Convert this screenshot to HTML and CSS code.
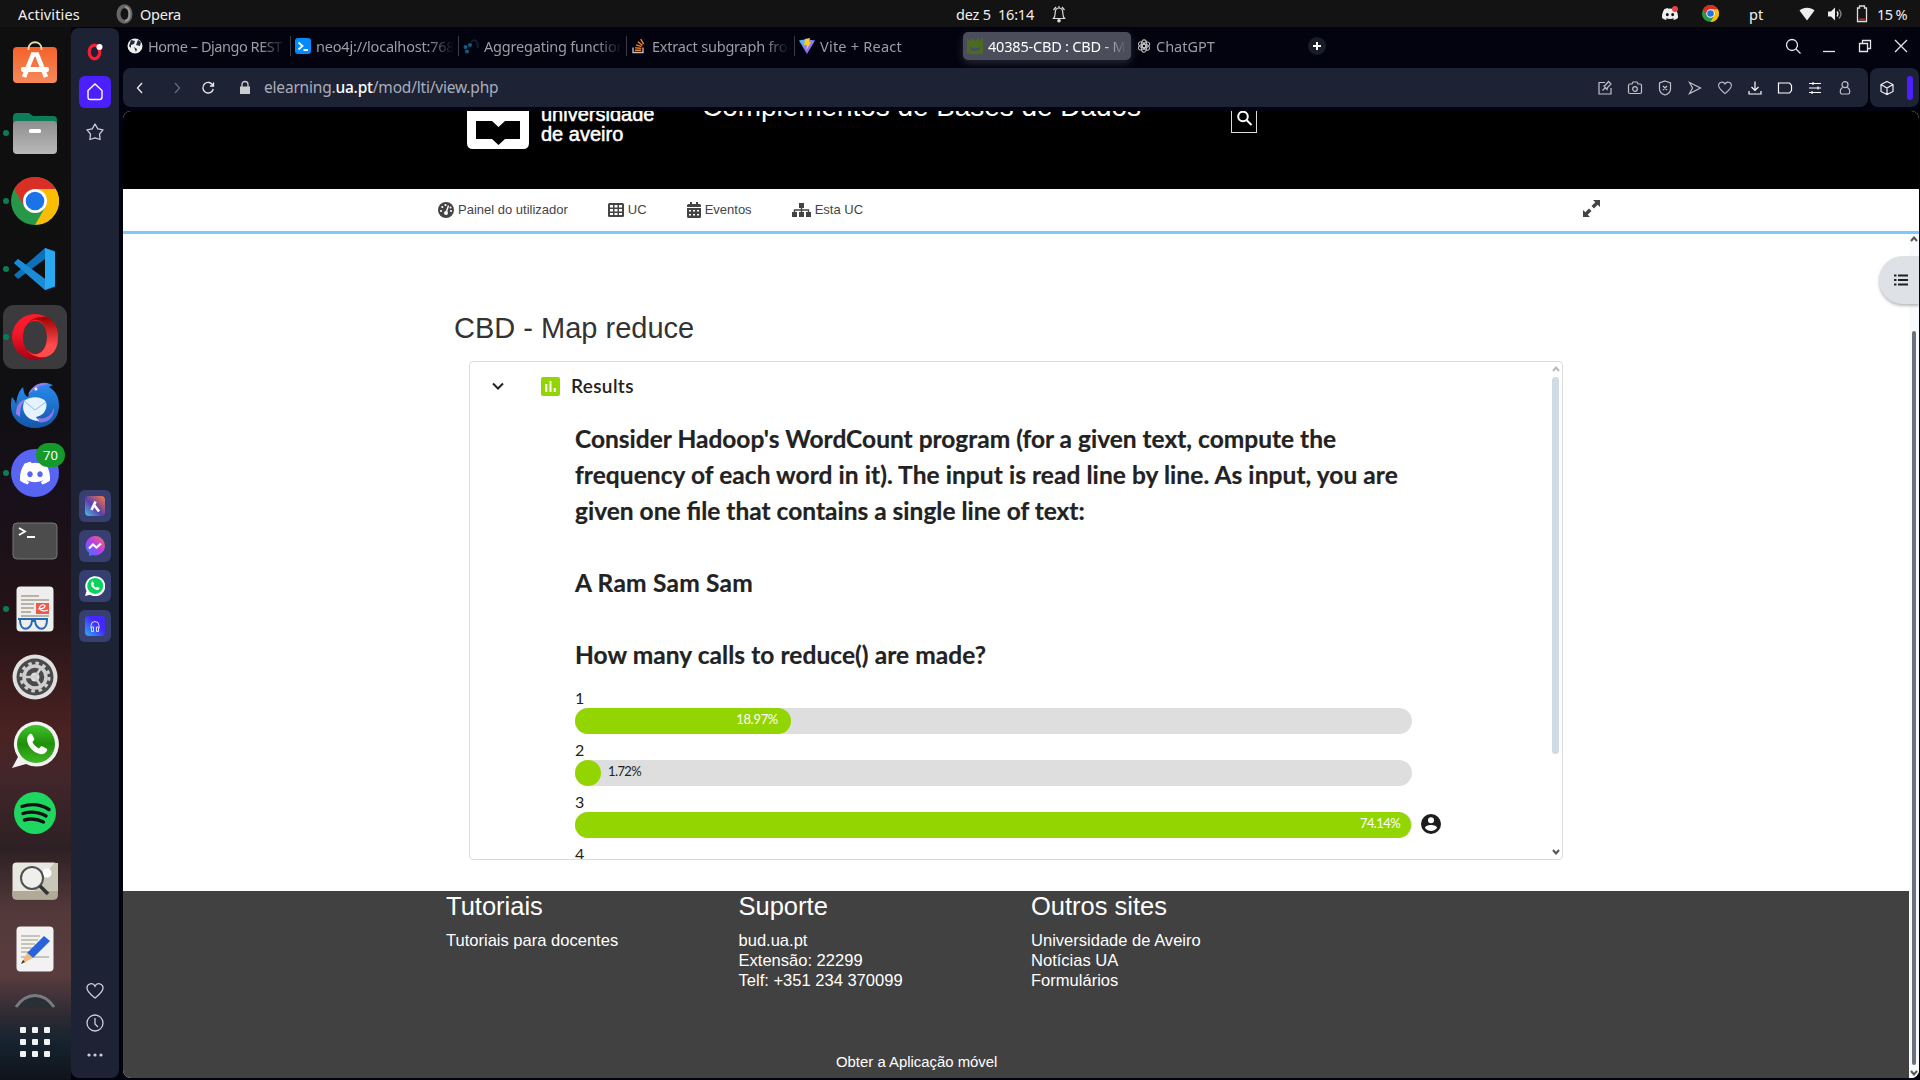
FILE: index.html
```html
<!DOCTYPE html>
<html lang="pt">
<head>
<meta charset="utf-8">
<title>40385-CBD : CBD - Map reduce</title>
<link rel="stylesheet" href="styles.css">
</head>
<body>
<svg class="defs" width="0" height="0" aria-hidden="true">
  <defs>
    <linearGradient id="gOrange" x1="0" y1="0" x2="0" y2="1"><stop offset="0" stop-color="#f4622a"/><stop offset="1" stop-color="#f58a5a"/></linearGradient>
    <linearGradient id="gGrey" x1="0" y1="0" x2="0" y2="1"><stop offset="0" stop-color="#8e8e8e"/><stop offset="1" stop-color="#b9b9b9"/></linearGradient>
    <linearGradient id="gOpera" x1="0" y1="0" x2="0" y2="1"><stop offset="0" stop-color="#ff1b2d"/><stop offset=".4" stop-color="#f5182a"/><stop offset="1" stop-color="#a70014"/></linearGradient>
    <linearGradient id="gOpera2" x1="0" y1="0" x2="0" y2="1"><stop offset="0" stop-color="#9c0000"/><stop offset=".7" stop-color="#ff4b4b"/></linearGradient>
    <linearGradient id="gBird" x1="0" y1="0" x2="0" y2="1"><stop offset="0" stop-color="#2a8cf0"/><stop offset="1" stop-color="#1256a8"/></linearGradient>
    <linearGradient id="gWa" x1="0" y1="0" x2="0" y2="1"><stop offset="0" stop-color="#3fc22b"/><stop offset=".5" stop-color="#1f8f0a"/><stop offset="1" stop-color="#3fb825"/></linearGradient>
    <linearGradient id="gAria" x1="0" y1="1" x2="1" y2="0"><stop offset="0" stop-color="#4bc5e8"/><stop offset=".45" stop-color="#5a3fb0"/><stop offset="1" stop-color="#ff7a3d"/></linearGradient>
    <linearGradient id="gMsg" x1="0" y1="1" x2="1" y2="0"><stop offset="0" stop-color="#1f84ff"/><stop offset=".5" stop-color="#b53cf0"/><stop offset="1" stop-color="#ff6a5c"/></linearGradient>
    <linearGradient id="gPlay" x1="0" y1="1" x2="1" y2="0"><stop offset="0" stop-color="#2ab3f5"/><stop offset=".6" stop-color="#4426ff"/></linearGradient>
    <linearGradient id="gVite" x1="0" y1="0" x2="1" y2="1"><stop offset="0" stop-color="#41d1ff"/><stop offset="1" stop-color="#bd34fe"/></linearGradient>
    <symbol id="chrome" viewBox="0 0 48 48">
      <circle cx="24" cy="24" r="24" fill="#279847"/>
      <path d="M3.200 12A24 24 0 0 1 44.800 12H24L13.600 30z" fill="#d93025"/>
      <path d="M24 12H44.800A24 24 0 0 1 24 48L34.400 30z" fill="#fbbc04"/>
      <circle cx="24" cy="24" r="12" fill="#fff"/><circle cx="24" cy="24" r="9.300" fill="#1a73e8"/>
    </symbol>
    <symbol id="discord" viewBox="0 0 24 24">
      <path fill-rule="evenodd" d="M20.300 4.400A19.800 19.800 0 0 0 15.400 2.900l-.6 1.200a18 18 0 0 0-5.500 0L8.600 2.900A19.700 19.700 0 0 0 3.700 4.400C.5 9 -.3 13.600.1 18.100a20 20 0 0 0 6 3l1.300-2-1.900-.9.400-.3a14.200 14.200 0 0 0 12.200 0l.4.300-1.900.9 1.300 2a19.900 19.900 0 0 0 6-3c.5-5.200-.8-9.700-3.600-13.700zM8 15.300c-1.200 0-2.200-1.100-2.200-2.400S6.800 10.500 8 10.500s2.200 1.100 2.200 2.400-1 2.400-2.200 2.400zm8 0c-1.200 0-2.200-1.100-2.200-2.400s1-2.400 2.200-2.400 2.200 1.100 2.200 2.400-1 2.400-2.200 2.400z"/>
    </symbol>
    <symbol id="phone" viewBox="0 0 24 24"><path d="M7 4.500c.6-.5 1.400-.4 1.800.2l1.500 3c.2.500.1 1-.3 1.400l-1 1.100c1 2.100 2.600 3.700 4.800 4.700l1.100-1.200c.4-.4.900-.5 1.400-.3l2.900 1.500c.6.300.8 1 .4 1.600-1 2-2.800 2.900-5 2.400C9.600 17.600 6 13.800 5.200 9.200 4.900 7.200 5.500 5.600 7 4.500z"/></symbol>
    <symbol id="heart" viewBox="0 0 20 20"><path d="M10 17C6.500 14 2 11 2 7a4.200 4.200 0 0 1 8-1.900A4.200 4.200 0 0 1 18 7c0 4-4.500 7-8 10z" fill="none" stroke="currentColor" stroke-width="1.300"/></symbol>
  </defs>
</svg>

<div class="desktop">
  <header class="topbar">
    <span class="act">Activities</span>
    <svg class="o" width="18" height="20" viewBox="0 0 18 20"><ellipse cx="8.500" cy="10" rx="6" ry="7.700" fill="none" stroke="#666" stroke-width="4"/><path d="M9 3c6 0 6 14 0 14" fill="none" stroke="#999" stroke-width="2"/></svg>
    <span class="opera">Opera</span>
    <span class="date">dez 5&nbsp; 16:14</span>
    <svg class="bell" width="14" height="18" viewBox="0 0 14 18" fill="none" stroke="#ddd" stroke-width="1.200"><path d="M1.500 13.500h11C10.500 11.500 11 9 10.700 6.500 10.300 4 9 3 7 3S3.700 4 3.300 6.500C3 9 3.500 11.500 1.500 13.500zM4 2 1.500 5M10 2l2.500 3M7 1v2"/><circle cx="7" cy="15.800" r="1.200" fill="#ddd"/></svg>
    <div class="tray">
      <svg class="t-disc" width="16" height="16" fill="#eee"><use href="#discord"/><circle cx="13" cy="3" r="3" fill="#ed4245"/></svg>
      <svg class="t-chr" width="17" height="17"><use href="#chrome"/></svg>
      <span class="t-pt">pt</span>
      <svg class="t-wifi" width="16" height="14" viewBox="0 0 16 14"><path d="M8 13.500.5 3.500C4.500-.3 11.500-.3 15.500 3.500z" fill="#eee"/></svg>
      <svg class="t-vol" width="16" height="16" viewBox="0 0 16 16"><path d="M1 5.500h3L8 1.500v13l-4-4H1z" fill="#eee"/><path d="M10 5.500q2 2.500 0 5" fill="none" stroke="#eee" stroke-width="1.300"/><path d="M12 3.500q4 4.500 0 9" fill="none" stroke="#888" stroke-width="1.300"/></svg>
      <svg class="t-bat" width="12" height="18" viewBox="0 0 12 18"><path d="M3.500 3V1h5v2h2v13.500h-9V3z" fill="none" stroke="#ddd" stroke-width="1.300"/><path d="M3 14.300h6" stroke="#e01b24" stroke-width="1.600"/></svg>
      <span class="t-pct">15 %</span>
    </div>
  </header>

  <div class="shell">
    <nav class="dock">
      <div class="app"><svg width="48" height="48" viewBox="0 0 48 48"><rect x="2" y="6" width="44" height="36" rx="4" fill="url(#gOrange)"/><path d="M17.500 9v-1c0-9 13-9 13 0v1" fill="none" stroke="#f0dcb4" stroke-width="1.800"/><path d="M13 36 22 13.500h4L35 36" fill="none" stroke="#fff" stroke-width="4.600"/><rect x="10" y="26" width="28" height="5" rx="2" fill="#fff"/></svg></div>
      <div class="app run"><svg width="48" height="48" viewBox="0 0 48 48"><path d="M2 20V8q0-4 4-4h12l4 3h20q4 0 4 4v12z" fill="#0d7d59"/><rect x="2" y="12" width="44" height="33" rx="4" fill="url(#gGrey)"/><rect x="18" y="20" width="12" height="4" rx="1.500" fill="#fff"/></svg></div>
      <div class="app run"><svg width="48" height="48"><use href="#chrome"/></svg></div>
      <div class="app run"><svg width="44" height="44" viewBox="0 0 44 44"><path d="M1 28 32 1l10 3v36l-10 3L1 16l4-4 27 20V12L5 32z" fill="#0b72b9"/><path d="M1 16l4-4 27 20v11z" fill="#1b8bd6"/><path d="M32 1l10 4v34l-10 4z" fill="#29a9f2"/></svg></div>
      <div class="app run active"><svg width="48" height="48" viewBox="0 0 48 48"><path fill-rule="evenodd" d="M24 1a23 23 0 1 0 0 46 23 23 0 0 0 0-46zm0 7c8 0 12 7 12 16s-4 16-12 16-12-7-12-16S16 8 24 8z" fill="url(#gOpera)"/><path d="M16 11C24 2 36 8 36 24s-12 22-20 13c7 10 31 13 31-13S23 1 16 11z" fill="url(#gOpera2)"/></svg></div>
      <div class="app"><svg width="48" height="48" viewBox="0 0 48 48"><path d="M1 16c3 4 4 5 4 8 1-8 2-13 7-18 1 5 1 8 5 10C20 6 27 1 36 2l6 2-4 2c7 4 10 11 10 18 0 14-10 23-24 23S0 37 0 26c0-4 0-7 1-10z" fill="url(#gBird)"/><path d="M17 14C20 5 29 0 38 3 30 4 23 7 17 14zM5 33c0-8 3-12 9-15-4 6-5 10-5 18z" fill="#9a7bea"/><path d="M27 37c8 2 14-3 16-11 1 11-7 17-16 15z" fill="#8878ea"/><path d="M13 20c6-5 18-5 22 1 2 6-2 14-10 15l3 4c-10 0-16-7-16-14z" fill="#e4f3ff"/><path d="m13 20 11 9 11-8" fill="none" stroke="#93bde8"/><circle cx="25" cy="8" r="1.500" fill="#fff"/></svg></div>
      <div class="app run"><svg width="48" height="48" viewBox="0 0 48 48"><circle cx="24" cy="24" r="24" fill="#5865f2"/><svg x="9" y="9" width="30" height="30" fill="#fff"><use href="#discord"/></svg></svg><span class="badge">70</span></div>
      <div class="app"><svg width="46" height="38" viewBox="0 0 46 38"><rect x="1" y="1" width="44" height="36" rx="4" fill="#4c4c4c" stroke="#777"/><path d="m7 6 6 3.500-6 3.500M15 15h8" fill="none" stroke="#fff" stroke-width="1.800"/></svg></div>
      <div class="app run"><svg width="38" height="46" viewBox="0 0 38 46"><rect x=".5" y=".5" width="37" height="45" rx="4" fill="#eee"/><path d="M5 10h18M5 14h28M5 18h13M5 22h13M5 26h10M5 30h28" stroke="#b9b3a4" stroke-width="2"/><rect x="20" y="17" width="13" height="11" fill="#ee5a4c"/><path d="M22 23c8 0 9-5 4-4-5 2-2 8 6 5" fill="none" stroke="#fff" stroke-width="1.200"/><path d="M2 33h30M4 34c0 12 11 11 12 1h3c1 10 12 11 12-1" fill="none" stroke="#2b68b2" stroke-width="2"/></svg></div>
      <div class="app"><svg width="46" height="46" viewBox="0 0 46 46"><circle cx="23" cy="23" r="22.500" fill="#e0e0e0"/><circle cx="23" cy="23" r="18.500" fill="#4a4a4a"/><circle cx="23" cy="23" r="14" fill="none" stroke="#cfcfcf" stroke-width="3" stroke-dasharray="3.600 3.730"/><circle cx="23" cy="23" r="11" fill="none" stroke="#cfcfcf" stroke-width="3.500"/><circle cx="23" cy="23" r="4.500" fill="#dedede"/><path d="M23 23h-11M23 23l6-9M23 23l6 9" stroke="#cfcfcf" stroke-width="2.400"/></svg></div>
      <div class="app"><svg width="48" height="48" viewBox="0 0 48 48"><path d="M1 47 7 36A22.500 22.500 0 1 1 15 43z" fill="#f2f2f2"/><circle cx="25" cy="23" r="19" fill="url(#gWa)"/><svg x="9" y="7" width="33" height="33" fill="#fff"><use href="#phone"/></svg></svg></div>
      <div class="app"><svg width="42" height="42" viewBox="0 0 42 42"><circle cx="21" cy="21" r="21" fill="#1ed760"/><path d="M8 14.500c9-3 19-2 27 3M9 21.500c8-2.500 16-1.500 23 2.500M10.500 28c7-2 13-1 19 2" fill="none" stroke="#121212" stroke-width="3.400" stroke-linecap="round"/></svg></div>
      <div class="app"><svg width="46" height="38" viewBox="0 0 46 38"><rect x=".5" y=".5" width="45" height="37" rx="4" fill="#e9e8e0"/><path d="m22 29 20-28h4v28z" fill="#c9c7b8"/><path d="M.5 29h45v5q0 3.500-4 3.500h-37q-4 0-4-3.500z" fill="#b0aa97"/><circle cx="35" cy="11" r="4.500" fill="#fff"/><circle cx="20" cy="16" r="11" fill="#efefeb" stroke="#4f5254" stroke-width="2"/><path d="m28 24 8 8" stroke="#333" stroke-width="3.500"/></svg></div>
      <div class="app"><svg width="38" height="46" viewBox="0 0 38 46"><rect x=".5" y=".5" width="37" height="45" rx="4" fill="#f2f2f2"/><path d="M5 10h19M5 14h17M5 18h14M5 22h12M5 26h10M5 31h28" stroke="#c8c3b4" stroke-width="2"/><path d="M11 27 28 10l6 5-17 17z" fill="#2a63d9"/><path d="m11 27 6 5-12 6z" fill="#f0b97d"/><path d="m7 34 2 2-4 2z" fill="#333"/></svg></div>
      <div class="app cut"><svg width="48" height="24" viewBox="0 0 48 24"><path d="M2 24Q10 5 24 5t22 19z" fill="#2a2f36"/><path d="M5 18Q13 6.500 24 6.500T43 18" fill="none" stroke="#777c80" stroke-width="3"/></svg></div>
      <div class="apps-grid"><i></i><i></i><i></i><i></i><i></i><i></i><i></i><i></i><i></i></div>
    </nav>

    <aside class="side">
      <svg class="s-logo" width="16" height="20" viewBox="0 0 16 20"><ellipse cx="7.500" cy="11" rx="5.300" ry="6.800" fill="none" stroke="#fa1e35" stroke-width="3.200"/><circle cx="12.500" cy="6" r="3" fill="#fff"/></svg>
      <div class="tile home"><svg width="18" height="20" viewBox="0 0 18 20"><path d="M2 8.500 9 2l7 6.500V15q0 2.500-2.500 2.500h-9Q2 17.500 2 15z" fill="none" stroke="#fff" stroke-width="1.400"/></svg></div>
      <svg class="s-star" width="20" height="20" viewBox="0 0 20 20"><path d="m10 2 2.800 4.800 5.200 1-3.500 4.400.6 5.300L10 15.800l-5.100 1.700.6-5.300L2 7.800l5.200-1z" fill="none" stroke="#ccd" stroke-width="1.300" stroke-linejoin="round"/></svg>
      <div class="tiles">
        <div class="tile"><svg width="20" height="20" viewBox="0 0 20 20"><rect width="20" height="20" rx="4" fill="url(#gAria)"/><path d="m10.500 5.500-4 8.500M9.500 9.500l4.500 6" stroke="#fff" stroke-width="2.600"/></svg></div>
        <div class="tile"><svg width="20" height="20" viewBox="0 0 20 20"><path d="M10 0a9.700 9.700 0 1 1-2.500 19L4 20v-3A9.700 9.700 0 0 1 10 0z" fill="url(#gMsg)"/><path d="m4 12.500 4-4 3.500 3 4.500-4" fill="none" stroke="#fff" stroke-width="2.200"/></svg></div>
        <div class="tile"><svg width="20" height="20" viewBox="0 0 20 20"><path d="M0 20 1.500 15A10 10 0 1 1 5 18.700z" fill="#fff"/><circle cx="10.200" cy="9.900" r="8" fill="#0bd15f"/><svg x="3" y="3" width="14" height="14" fill="#fff"><use href="#phone"/></svg></svg></div>
        <div class="tile"><svg width="20" height="20" viewBox="0 0 20 20"><rect width="20" height="20" rx="4" fill="url(#gPlay)"/><path d="M6 12.500V9.500a4 4 0 0 1 8 0v3M6.500 11v4.500h2V11zM11.500 11v4.500h2V11z" fill="none" stroke="#d9d9ff" stroke-width="1"/></svg></div>
      </div>
      <svg class="s-heart" width="20" height="20"><use href="#heart"/></svg>
      <svg class="s-clock" width="20" height="20" viewBox="0 0 20 20" fill="none" stroke="#ccd" stroke-width="1.300"><circle cx="10" cy="10" r="8"/><path d="M10 5v6l3 3"/></svg>
      <svg class="s-dots" width="20" height="6" viewBox="0 0 20 6" fill="#ccd"><circle cx="4" cy="3" r="1.600"/><circle cx="10" cy="3" r="1.600"/><circle cx="16" cy="3" r="1.600"/></svg>
    </aside>

    <main class="browser">
      <div class="tabs">
        <div class="tab first"><svg width="16" height="16" viewBox="0 0 16 16"><circle cx="8" cy="8" r="7.500" fill="#eee"/><path d="m4 2 4 1-1 3-3 1v3L2 8zM9 7l4 1 1-4-3-2zM7 9l3 2-1 3z" fill="#222b3a"/></svg><span>Home – Django REST</span></div>
        <div class="tab"><svg width="16" height="16" viewBox="0 0 16 16"><rect width="16" height="16" rx="3" fill="#018bff"/><path d="m3.500 4.500 4 3.500-4 3.500M8.500 12H13" fill="none" stroke="#fff" stroke-width="1.800"/></svg><span>neo4j://localhost:768</span></div>
        <div class="tab"><svg width="16" height="16" viewBox="0 0 16 16"><circle cx="7" cy="7" r="2" fill="#0b5e86"/><circle cx="2.500" cy="9" r="2" fill="#0b5e86"/><circle cx="4" cy="13.500" r="2" fill="#0b5e86"/><path d="M8 4c4-4 7-1 7 6" fill="none" stroke="#12202f" stroke-width="1.800"/></svg><span>Aggregating function</span></div>
        <div class="tab"><svg width="16" height="16" viewBox="0 0 16 16"><path d="M2 9.500v5h10v-5" fill="none" stroke="#bcbbbb" stroke-width="1.400"/><path d="M4 12.300h6M4.200 9.700l6 .7M5 6.800l5.600 1.800M6.800 3.800l4.700 3.600M9.700 1.200l3 5" stroke="#f48024" stroke-width="1.400"/></svg><span>Extract subgraph from</span></div>
        <div class="tab vite"><svg width="16" height="16" viewBox="0 0 16 16"><path d="M0 2.500 7 1.300l9 1.200L8 16z" fill="url(#gVite)"/><path d="m6 1 5-1-1 4h2l-4.500 8L8 7H5z" fill="#ffc92c"/></svg><span>Vite + React</span></div>
        <div class="tab current"><svg width="16" height="16" viewBox="0 0 16 16"><path d="M0 0 3 3l2-3 3 3 3-3 2 3 3-3v16H0zM3 8v4h2v1h6v-1h2V8l-2 2H5z" fill="#4b6a22" fill-rule="evenodd"/></svg><span>40385-CBD : CBD - M</span></div>
        <div class="tab last"><svg width="14" height="14" viewBox="0 0 16 16" fill="none" stroke="#bbb" stroke-width="1.200"><ellipse cx="8" cy="5.500" rx="3" ry="4.500"/><ellipse cx="8" cy="5.500" rx="3" ry="4.500" transform="rotate(60 8 8)"/><ellipse cx="8" cy="5.500" rx="3" ry="4.500" transform="rotate(120 8 8)"/><ellipse cx="8" cy="5.500" rx="3" ry="4.500" transform="rotate(180 8 8)"/><ellipse cx="8" cy="5.500" rx="3" ry="4.500" transform="rotate(240 8 8)"/><ellipse cx="8" cy="5.500" rx="3" ry="4.500" transform="rotate(300 8 8)"/></svg><span>ChatGPT</span></div>
        <div class="plus"><svg width="18" height="18" viewBox="0 0 18 18"><circle cx="9" cy="9" r="9" fill="#1a1c2a"/><path d="M9 5v8M5 9h8" stroke="#fff" stroke-width="2"/></svg></div>
        <div class="win">
          <svg width="18" height="18" viewBox="0 0 18 18"><circle cx="8" cy="8" r="5.500"/><path d="m12 12 4.500 4.500"/></svg>
          <svg width="18" height="18" viewBox="0 0 18 18"><path d="M3 14.500h12"/></svg>
          <svg width="18" height="18" viewBox="0 0 18 18"><path d="M3.500 6.500h8v8h-8zM6.500 6.500v-3h8v8h-3"/></svg>
          <svg width="18" height="18" viewBox="0 0 18 18"><path d="m3 3 12 12M15 3 3 15"/></svg>
        </div>
      </div>

      <div class="bars">
        <div class="address">
          <svg class="b-back" width="14" height="14" viewBox="0 0 14 14"><path d="M9 2 4.500 7 9 12"/></svg>
          <svg class="b-fwd" width="14" height="14" viewBox="0 0 14 14"><path d="m5 2 4.500 5L5 12"/></svg>
          <svg class="b-rel" width="14" height="14" viewBox="0 0 14 14"><path d="M12 4.500A5.300 5.300 0 1 0 12.300 8M12.500 1.500v3.500H9"/></svg>
          <svg class="b-lock" width="12" height="16" viewBox="0 0 12 16"><path d="M1 6.500h10V14H1z" fill="#ccc" stroke="none"/><path d="M3 7V4.500q0-3 3-3t3 3V7" stroke="#ccc"/></svg>
          <span class="url">elearning.<b>ua.pt</b>/mod/lti/view.php</span>
          <div class="tools">
            <svg width="16" height="16" viewBox="0 0 16 16"><path d="M8 2.500H2v11.500h12V8M5.500 10.500 8 8M7 6l3 3.500.5-2 3.500-3.500-2.500-2.500L8.500 5z"/></svg>
            <svg width="16" height="16" viewBox="0 0 16 16"><path d="M1.500 5.500Q1.500 4 3 4h2l1-2h4l1 2h2q1.500 0 1.500 1.500v6.500q0 1.500-1.500 1.500H3q-1.500 0-1.500-1.500z"/><circle cx="8" cy="9" r="2.300"/></svg>
            <svg width="16" height="16" viewBox="0 0 16 16"><path d="m8 1 5.500 2v6c0 3-2.500 5-5.500 6-3-1-5.500-3-5.500-6V3zM6 6l4 4M10 6l-4 4"/></svg>
            <svg width="16" height="16" viewBox="0 0 16 16"><path d="m2.500 2.500 11 5.500-11 5.500L5.500 8z"/></svg>
            <svg width="16" height="16"><use href="#heart"/></svg>
            <svg class="hi" width="16" height="16" viewBox="0 0 16 16"><path d="M8 1.500V10M4.500 7 8 10.500 11.500 7M2 11v3h12v-3"/></svg>
            <svg class="hi" width="16" height="16" viewBox="0 0 16 16"><path d="M1.500 3h11l2 2.500v5l-2 2.500h-11z"/></svg>
            <svg class="hi" width="16" height="16" viewBox="0 0 16 16"><path d="M2 3.500h12M2 8h12M2 12.500h12M6 2v3M11 6.500v3M5 11v3"/></svg>
            <svg width="16" height="16" viewBox="0 0 16 16"><circle cx="8" cy="4.700" r="3"/><path d="M5.700 7.500C3 9 3 11 3.500 13q.5 1 1.500 1h6q1 0 1.500-1c.5-2 .5-4-2.200-5.500"/></svg>
          </div>
        </div>
        <div class="ext"><svg width="16" height="16" viewBox="0 0 16 16"><path d="m8 1.500 6 3v7l-6 3-6-3v-7zM2 4.500l6 3.500 6-3.500M8 8v6.500"/></svg><i></i></div>
      </div>

      <div class="page">
        <div class="uahead">
          <svg class="ualogo" width="62" height="38" viewBox="0 0 62 38"><path d="M0 0h62v32q0 6-6 6H6q-6 0-6-6z" fill="#fff"/><path d="M9 10h16l6.500 6L38 10h15v18H38l-6.500 6-6.500-6H9z"/></svg>
          <div class="uaname">universidade<br>de aveiro</div>
          <h1>Complementos de Bases de Dados</h1>
          <div class="uasearch"><svg width="17" height="17" viewBox="0 0 17 17" fill="none" stroke="#fff" stroke-width="2"><circle cx="7" cy="6.500" r="4.800"/><path d="m10.500 10 5 5"/></svg></div>
        </div>
        <div class="uanav">
          <a><svg width="16" height="16" viewBox="0 0 16 16"><circle cx="8" cy="8" r="8" fill="#444"/><path d="m10.500 3.500-2 6" stroke="#fff" stroke-width="1.400"/><circle cx="8" cy="11" r="2" fill="#fff"/><g fill="#fff"><circle cx="3" cy="9" r="1.100"/><circle cx="4.300" cy="5" r="1.100"/><circle cx="7.500" cy="3" r="1.100"/><circle cx="13" cy="9" r="1.100"/><circle cx="12.500" cy="5.500" r="1"/></g></svg><span>Painel do utilizador</span></a>
          <a><svg width="16" height="16" viewBox="0 0 16 16"><rect y="1" width="16" height="14" rx="1.500" fill="#444"/><path d="M2 3h3v2.500H2zM6.500 3h3v2.500h-3zM11 3h3v2.500h-3zM2 7h3v2.500H2zM6.500 7h3v2.500h-3zM11 7h3v2.500h-3zM2 11h3v2H2zM6.500 11h3v2h-3zM11 11h3v2h-3z" fill="#fff"/></svg><span>UC</span></a>
          <a><svg width="14" height="16" viewBox="0 0 14 16"><path d="M0 5V3.500Q0 2 1.500 2H3V0h2v2h4V0h2v2h1.500Q14 2 14 3.500V5zM0 6h14v8.500q0 1.500-1.500 1.500h-11Q0 16 0 14.500z" fill="#444"/><path d="M2 8h2v1.500H2zM6 8h2v1.500H6zM10 8h2v1.500h-2zM2 12h2v1.500H2zM6 12h2v1.500H6zM10 12h2v1.500h-2z" fill="#fff"/></svg><span>Eventos</span></a>
          <a><svg width="19" height="16" viewBox="0 0 19 16"><path d="M7 1h5v5H7zM0 10h5v5H0zM7 10h5v5H7zM14 10h5v5h-5z" fill="#444"/><path d="M9.500 6v4M2.500 10V8h14v2" fill="none" stroke="#444" stroke-width="1.400"/></svg><span>Esta UC</span></a>
          <svg class="expand" width="17" height="17" viewBox="0 0 17 17" fill="#444"><path d="M10 0h7v7l-2.300-2.300L11 8.500 8.500 6l3.800-3.700zM7 17H0v-7l2.300 2.300L6 8.500 8.500 11l-3.800 3.700z"/></svg>
        </div>
        <div class="view">
          <div class="doc">
            <div class="content">
              <h2>CBD - Map reduce</h2>
              <div class="card">
                <div class="inner">
                  <div class="rhead">
                    <svg class="chev" width="14" height="14" viewBox="0 0 14 14"><path d="m2 4.500 5 5 5-5" fill="none" stroke="#222" stroke-width="2"/></svg>
                    <svg class="poll" width="19" height="19" viewBox="0 0 19 19"><rect width="19" height="19" rx="2" fill="#93d500"/><path d="M5.300 7v8M9.500 4v11M13.700 11v4" stroke="#fff" stroke-width="2"/></svg>
                    <span>Results</span>
                  </div>
                  <div class="question">
                    Consider Hadoop's WordCount program (for a given text, compute the<br>
                    <span class="wide">frequency of each word in it). The input is read line by line. As input, you are</span><br>
                    given one file that contains a single line of text:<br><br>
                    <span class="wider">A Ram Sam Sam</span><br><br>
                    <span class="wide">How many calls to reduce() are made?</span>
                  </div>
                  <div class="option"><div class="label">1</div><div class="row"><div class="track"><div class="fill" style="width:216px"><span class="pct">18.97%</span></div></div></div></div>
                  <div class="option"><div class="label">2</div><div class="row"><div class="track"><div class="fill" style="width:26px"></div><em>1.72%</em></div></div></div>
                  <div class="option"><div class="label">3</div><div class="row"><div class="track"><div class="fill" style="width:836px"><span>74.14%</span></div></div>
                    <svg class="me" width="20" height="20" viewBox="0 0 20 20"><circle cx="10" cy="10" r="10" fill="#1c1c1c"/><circle cx="10" cy="6.200" r="3" fill="#fff"/><path d="M4 14c0-4 12-4 12 0-3 4-9 4-12 0z" fill="#fff"/></svg></div></div>
                  <div class="option"><div class="label">4</div></div>
                </div>
                <div class="scroll"><svg width="8" height="6" viewBox="0 0 8 6"><path d="m1 5 3-3.500L7 5" stroke="#bbb"/></svg><i></i><svg class="dn" width="8" height="6" viewBox="0 0 8 6"><path d="m1 1 3 3.500L7 1" stroke="#555"/></svg></div>
              </div>
            </div>
            <footer>
              <div class="cols">
                <section><h3>Tutoriais</h3><p>Tutoriais para docentes</p></section>
                <section><h3>Suporte</h3><p>bud.ua.pt<br>Extensão: 22299<br>Telf: +351 234 370099</p></section>
                <section><h3>Outros sites</h3><p>Universidade de Aveiro<br>Notícias UA<br>Formulários</p></section>
              </div>
              <div class="mobile">Obter a Aplicação móvel</div>
            </footer>
          </div>
          <div class="vscroll"><svg width="8" height="6" viewBox="0 0 8 6"><path d="m1 5 3-3.500L7 5"/></svg><i></i><svg width="8" height="6" viewBox="0 0 8 6"><path d="m1 1 3 3.500L7 1"/></svg></div>
          <div class="drawer"><svg width="14" height="14" viewBox="0 0 14 14" stroke="#1d2125" stroke-width="2"><path d="M0 2.500h2.500M4 2.500h10M0 7h2.500M4 7h10M0 11.500h2.500M4 11.500h10"/></svg></div>
        </div>
      </div>
    </main>
  </div>
</div>
</body>
</html>
```
FILE: styles.css
```css
* { box-sizing: border-box; }
body { margin: 0; background: #000; font-family: "Liberation Sans", Arial, sans-serif; }
svg { display: block; flex: none; }
.defs { position: absolute; }
.desktop { width: 1920px; height: 1080px; overflow: hidden; display: flex; flex-direction: column; background: #02030f; }

.topbar { height: 27px; flex: none; display: flex; align-items: center; background: #131313; color: #f0f0f0; font: 14.5px/26px "Noto Sans", sans-serif; white-space: pre; }
.act { margin-left: 18px; width: 62px; letter-spacing: .15px; }
.o { margin-left: 36px; }
.opera { margin-left: 6px; width: 816px; letter-spacing: -.25px; }
.date { width: 96px; letter-spacing: -.2px; }
.bell { flex: none; }
.tray { display: flex; align-items: center; margin-left: 596px; }
.t-chr { margin-left: 24px; }
.t-pt { margin-left: 30px; width: 15px; }
.t-wifi { margin-left: 35px; }
.t-vol { margin-left: 12px; }
.t-bat { margin-left: 13px; margin-right: 9px; }
.t-pct { letter-spacing: -.6px; }

.shell { flex: 1; display: flex; min-height: 0; }
.dock { width: 71px; flex: none; padding-top: 6px; overflow: hidden; display: flex; flex-direction: column; gap: 4px; background:
  linear-gradient(180deg, #0f0f0f 0, #100f12 36%, #17101a 44%, #241317 56%, #391b1c 62%, #4a2222 67%, #43262a 71%, #2d2024 78%, #54393a 84%, #583c3e 90%, #2c2a33 94%, #15232f 96.500%, #10131b 100%); }
.app { position: relative; width: 64px; height: 64px; margin-left: 3px; flex: none; display: flex; align-items: center; justify-content: center; border-radius: 11px; }
.app.active { background: #3b3a3c; }
.app.run::before { content: ""; position: absolute; left: 0; top: 29px; width: 6px; height: 6px; border-radius: 3px; background: #0a7d56; }
.app.cut { height: 23px; padding-top: 4px; align-items: flex-start; overflow: hidden; border-radius: 0; }
.badge { position: absolute; left: 33px; top: 2px; width: 29px; height: 24px; border-radius: 12px; background: #14992a; color: #fff; font: 13px/24px "Noto Sans", sans-serif; text-align: center; }
.apps-grid { display: grid; grid-template-columns: repeat(3, 6px); gap: 6px; margin: 15px 0 0 20px; }
.apps-grid i { width: 6px; height: 6px; border-radius: 1px; background: #f2f2f2; }

.side { width: 48px; flex: none; margin: 1px 0 2px; background: #1e2235; border-radius: 8px; display: flex; flex-direction: column; align-items: center; color: #ccd; }
.s-logo { margin-top: 13px; }
.tile { width: 32px; height: 32px; border-radius: 6px; background: #363f70; display: flex; align-items: center; justify-content: center; }
.home { margin-top: 15px; background: #4c1fff; }
.s-star { margin-top: 14px; }
.tiles { margin-top: 348px; display: grid; gap: 8px; }
.s-heart { margin-top: 339px; }
.s-clock { margin-top: 12px; }
.s-dots { margin-top: 19px; }

.browser { flex: 1; min-width: 0; margin-left: 4px; display: flex; flex-direction: column; }
.tabs { height: 41px; flex: none; display: flex; align-items: center; padding-bottom: 4px; font: 14.500px/20px "Noto Sans", sans-serif; color: #9c9da3; }
.tab { width: 168px; height: 20px; flex: none; display: flex; align-items: center; gap: 5px; padding-left: 4px; border-right: 1px solid #3a3b45; white-space: nowrap; overflow: hidden; letter-spacing: -.2px; }
.tab span { width: 140px; overflow: hidden; -webkit-mask-image: linear-gradient(90deg, #000 112px, transparent 138px); mask-image: linear-gradient(90deg, #000 112px, transparent 138px); }
.tab.first { letter-spacing: -.45px; }
.tab.vite { border: 0; letter-spacing: .23px; }
.tab.current { height: 28px; border: 0; border-radius: 5px; background: #4b4d5b; color: #fff; box-shadow: 0 3px 8px #4b4d5b80; }
.tab.last { border: 0; padding-left: 6px; letter-spacing: 0; }
.plus { margin-left: 9px; }
.win { display: flex; gap: 18px; margin-left: 458px; fill: none; stroke: #e6e6ea; stroke-width: 1.300; }

.bars { height: 39px; flex: none; display: flex; gap: 2px; }
.address { width: 1745px; display: flex; align-items: center; border-radius: 8px; background: #1e2235; fill: none; stroke: #ececf0; stroke-width: 1.300; }
.b-back { margin-left: 10px; }
.b-fwd { margin-left: 23px; stroke: #666a7a; }
.b-rel { margin-left: 17px; }
.b-lock { margin-left: 24px; }
.url { margin: 0 0 2px 13px; font: 15.500px/24px "Noto Sans", sans-serif; letter-spacing: -.2px; color: #a9adba; }
.url b { font-weight: 500; color: #fff; }
.tools { margin-left: auto; margin-right: 15px; display: flex; gap: 14px; stroke: #bfc1ca; color: #bfc1ca; stroke-width: 1.200; }
.tools .hi { stroke: #fff; }
.ext { width: 49px; display: flex; align-items: center; border-radius: 8px; background: #1e2235; padding-left: 9px; fill: none; stroke: #eee; stroke-width: 1.200; }
.ext i { width: 6px; height: 24px; margin-left: 12px; border-radius: 3px; background: #4c1fff; }

.page { flex: 1; min-height: 0; width: 1796px; margin: 4px 0 2px; border-radius: 8px; overflow: hidden; display: flex; flex-direction: column; background: #fff; }
.uahead { height: 78px; flex: none; overflow: hidden; background: #000; color: #fff; display: flex; align-items: flex-start; padding-left: 344px; }
.uaname { margin: -7px 0 0 12px; width: 161px; font-size: 20px; line-height: 20px; -webkit-text-stroke: .5px #fff; white-space: nowrap; }
h1 { margin: -20px 0 0; width: 529px; font-size: 28px; line-height: 32px; font-weight: 400; letter-spacing: -.05px; }
.uasearch { width: 26px; height: 28px; margin-top: -6px; border: 1px solid #ddd; display: flex; align-items: flex-end; justify-content: center; padding-bottom: 5px; }
.uanav { height: 45px; flex: none; display: flex; align-items: flex-start; padding: 12px 0 0 315px; border-bottom: 3px solid #79cbff; font-size: 13px; line-height: 18px; color: #444; }
.uanav a { display: flex; gap: 4px; align-items: center; margin-right: 40px; }
.expand { margin: -1px 0 0 680px; }

.view { position: relative; flex: 1; min-height: 0; display: flex; }
.doc { flex: 1; display: flex; flex-direction: column; }
.content { height: 657px; flex: none; padding: 74px 0 0 331px; }
h2 { margin: 0 0 13px; font-size: 29px; line-height: 40px; font-weight: 400; color: #333; }
.card { width: 1094px; height: 499px; margin-left: 15px; border: 1px solid #d9dbdd; border-radius: 4px; display: flex; overflow: hidden; font-family: Lato, sans-serif; color: #222; }
.inner { flex: 1; overflow: hidden; padding-left: 105px; }
.rhead { height: 48px; margin-left: -84px; display: flex; align-items: center; font-size: 19px; font-weight: 600; letter-spacing: .35px; }
.rhead span { margin-bottom: 2px; }
.poll { margin: 0 11px 0 36px; }
.question { height: 252px; margin: 11px 0 9px; font-size: 24.500px; line-height: 36px; font-weight: 700; -webkit-text-stroke: .2px #222; white-space: nowrap; }
.wide { letter-spacing: .06px; }
.wider { letter-spacing: .23px; }
.option { height: 52px; font-size: 16px; }
.label { height: 26px; line-height: 32px; }
.row { display: flex; align-items: center; gap: 9px; }
.track { width: 837px; height: 26px; border-radius: 13px; background: #dedede; display: flex; align-items: center; font-size: 13px; line-height: 23px; letter-spacing: -.6px; }
.fill { height: 26px; border-radius: 13px; background: #93d500; color: #fff; display: flex; justify-content: flex-end; padding-right: 11px; }
.pct { letter-spacing: -.3px; margin-right: 2px; }
.track em { font-style: normal; margin: 0 0 3px 7px; }
.me { margin-bottom: 2px; }
.scroll { width: 15px; display: flex; flex-direction: column; align-items: center; padding: 4px 0 4px 2px; fill: none; stroke-width: 2; }
.scroll i { width: 7px; height: 377px; margin-top: 5px; border-radius: 4px; background: #d0dbe4; }
.scroll .dn { margin-top: auto; }

footer { flex: 1; background: #414141; color: #fff; }
.cols { display: flex; padding-left: 323px; height: 161px; }
.cols section { width: 292.500px; }
h3 { margin: 0 0 10px; font-size: 25.500px; line-height: 30px; font-weight: 400; }
p { margin: 0; font-size: 16.550px; line-height: 20px; }
.mobile { padding-left: 713px; font-size: 14.900px; line-height: 20px; }
.vscroll { width: 10px; background: #f8fafd; display: flex; flex-direction: column; align-items: center; padding: 2px 0; fill: none; stroke: #555; stroke-width: 2; }
.vscroll i { flex: 1; width: 4px; margin: 89px 0 5px; border-radius: 2px; background: #69717d; }
.drawer { position: absolute; right: 0; top: 22px; width: 40px; height: 48px; border-radius: 24px 0 0 24px; background: #dee2e6; box-shadow: 0 2px 3px #0004; display: flex; align-items: center; padding-left: 15px; }
```
